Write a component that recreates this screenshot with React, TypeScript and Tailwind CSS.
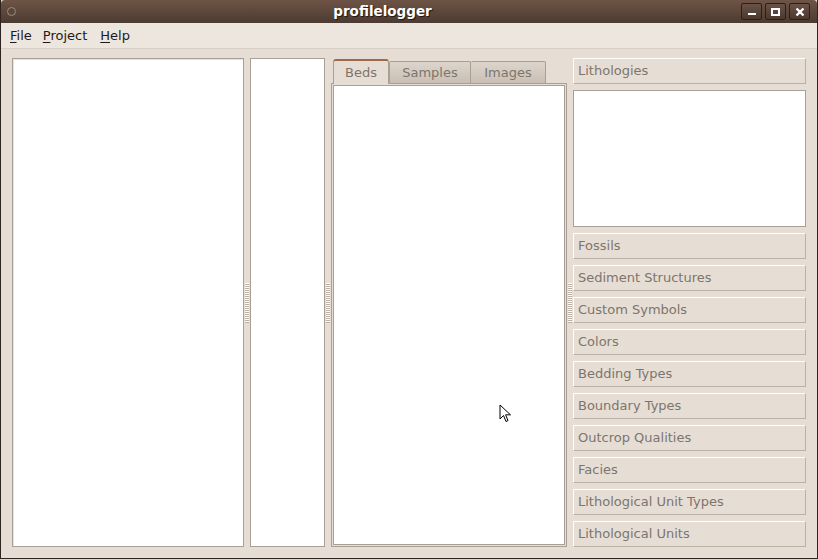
import React from 'react';

const sideButtons = [
  'Fossils',
  'Sediment Structures',
  'Custom Symbols',
  'Colors',
  'Bedding Types',
  'Boundary Types',
  'Outcrop Qualities',
  'Facies',
  'Lithological Unit Types',
  'Lithological Units',
];

function Grip() {
  return (
    <div className="w-[6px] flex flex-col items-center justify-center">
      <div className="w-[4px] h-[40px] bg-[repeating-linear-gradient(to_bottom,#ffffff_0px,#ffffff_1px,#b9afa4_1px,#b9afa4_2px)]" />
    </div>
  );
}

function SideButton({ label }: { label: string }) {
  return (
    <div className="h-[26px] flex items-center px-[4px] border border-[#bab1a7] border-t-white border-l-white bg-[#e6ded5] text-[13px] text-[#7d756d]">
      {label}
    </div>
  );
}

function Menu({ label, className }: { label: string; className?: string }) {
  return (
    <span className={`text-[13px] text-[#1e1a16] ${className ?? ''}`}>
      <span className="underline underline-offset-2">{label[0]}</span>
      {label.slice(1)}
    </span>
  );
}

export default function App() {
  return (
    <div
      className="w-[818px] h-[559px] flex flex-col bg-[#e6ded5] border border-t-0 border-[#2e2520] overflow-hidden relative"
      style={{ fontFamily: '"DejaVu Sans", "Liberation Sans", sans-serif' }}
    >
      {/* title bar */}
      <div className="h-[23px] shrink-0 flex items-center bg-gradient-to-b from-[#6e5446] to-[#4c3b31] rounded-t-[4px] relative px-[6px]">
        <div className="w-[9px] h-[9px] rounded-full border border-[#9c8b80] bg-[#5a463b]" />
        <div className="flex-1 text-center pl-[8px] font-bold text-[13.5px] text-white [text-shadow:1px_1px_1px_#1e1612]">
          profilelogger
        </div>
        <div className="flex gap-[3px] pr-[1px]">
          <div className="w-[21px] h-[17px] rounded-[2px] border border-[#2a201b] bg-gradient-to-b from-[#6a5246] to-[#4a392f] flex items-end justify-center pb-[4px]">
            <div className="w-[8px] h-[2px] bg-white" />
          </div>
          <div className="w-[21px] h-[17px] rounded-[2px] border border-[#2a201b] bg-gradient-to-b from-[#6a5246] to-[#4a392f] flex items-center justify-center">
            <div className="w-[9px] h-[8px] border-2 border-white" />
          </div>
          <div className="w-[21px] h-[17px] rounded-[2px] border border-[#2a201b] bg-gradient-to-b from-[#6a5246] to-[#4a392f] flex items-center justify-center">
            <svg width="10" height="10" viewBox="0 0 10 10">
              <path d="M1.5 1.5 L8.5 8.5 M8.5 1.5 L1.5 8.5" stroke="white" strokeWidth="2.4" />
            </svg>
          </div>
        </div>
      </div>

      {/* menu bar */}
      <div className="h-[26px] shrink-0 flex items-center pl-[9px] bg-[#ece6df] border-b border-[#d8cfc5]">
        <Menu label="File" />
        <Menu label="Project" className="ml-[11px]" />
        <Menu label="Help" className="ml-[13px]" />
      </div>

      {/* body */}
      <div className="flex-1 flex pt-[9px] pb-[11px] pl-[11px] pr-[11px] min-h-0">
        <div className="w-[232px] border border-[#a99f94] bg-white shadow-[inset_1px_1px_0_#e8e2dc]" />
        <Grip />
        <div className="w-[75px] border border-[#a99f94] bg-white" />
        <Grip />

        {/* notebook */}
        <div className="w-[236px] flex flex-col">
          <div className="h-[25px] flex items-end pl-[2px] relative z-10">
            <div className="h-[25px] w-[56px] flex items-center justify-center text-[13px] text-[#7d756d] bg-[#e6ded5] border border-b-0 border-[#a99f94] border-t-[2px] border-t-[#9a6a4c] rounded-t-[3px] -mb-px">
              Beds
            </div>
            <div className="h-[22px] w-[82px] flex items-center justify-center text-[13px] text-[#7d756d] bg-gradient-to-b from-[#ddd5cb] to-[#c9bfb4] border border-b-0 border-[#a99f94] rounded-t-[2px]">
              Samples
            </div>
            <div className="h-[22px] w-[75px] flex items-center justify-center text-[13px] text-[#7d756d] bg-gradient-to-b from-[#ddd5cb] to-[#c9bfb4] border border-b-0 border-l-0 border-[#a99f94] rounded-t-[2px]">
              Images
            </div>
          </div>
          <div className="flex-1 border border-[#a99f94] p-[1px] bg-[#e6ded5]">
            <div className="h-full border border-[#a99f94] bg-white" />
          </div>
        </div>
        <Grip />

        {/* right column */}
        <div className="w-[233px] flex flex-col gap-[6px]">
          <SideButton label="Lithologies" />
          <div className="h-[137px] border border-[#a99f94] bg-white" />
          {sideButtons.map((b) => (
            <SideButton key={b} label={b} />
          ))}
        </div>
      </div>

      {/* mouse pointer */}
      <svg className="absolute left-[498px] top-[404px]" width="14" height="21" viewBox="0 0 14 21">
        <path d="M1 1 L1 15 L4.5 11.5 L7 17.5 L9 16.6 L6.6 10.8 L11.5 10.8 Z" fill="white" stroke="black" strokeWidth="1" strokeLinejoin="round" />
      </svg>
    </div>
  );
}
